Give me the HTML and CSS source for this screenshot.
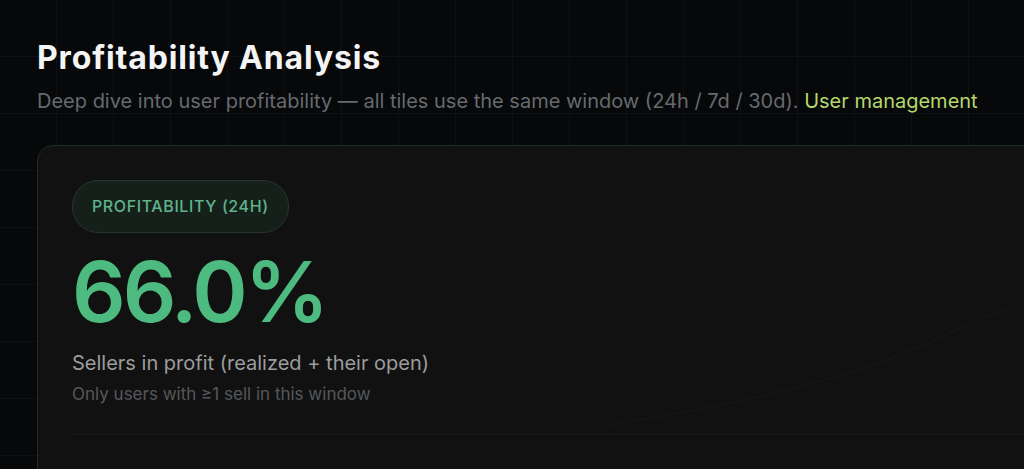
FILE: index.html
```html
<!DOCTYPE html>
<html lang="en">
<head>
    <meta charset="utf-8" />
    <title>Profitability Analysis</title>
    <link rel="stylesheet" href="styles.css">
</head>
<body>
<main class="page">
    <header class="page-head">
        <h1>Profitability Analysis</h1>
        <p class="lede">Deep dive into user profitability — all tiles use the same window (24h / 7d / 30d). <a href="#users">User management</a></p>
    </header>
    <section class="tile">
        <span class="badge">PROFITABILITY (24H)</span>
        <div class="big">66.0%</div>
        <p class="caption">Sellers in profit (realized + their open)</p>
        <p class="note">Only users with ≥1 sell in this window</p>
        <svg class="spark" viewBox="0 0 420 170" preserveAspectRatio="none" aria-hidden="true">
            <path d="M0,130 C60,120 120,110 180,95 C240,80 300,60 340,40 C370,25 400,15 420,10"/>
        </svg>
        <hr class="rule">
    </section>
</main>
</body>
</html>
```
FILE: styles.css
```css
html, body { margin: 0; height: 100%; overflow: hidden; }
body {
    background-color: #07080a;
    background-image:
        linear-gradient(#0e1013 1px, transparent 1px),
        linear-gradient(90deg, #0e1013 1px, transparent 1px);
    background-size: 57px 57px;
    background-position: -1px -1px;
    font-family: Inter, "Noto Sans", sans-serif;
    color: #e8e8e8;
}
.page {
    padding: 38px 0 0 37px;
}
.page-head h1 {
    margin: 0;
    font-size: 32px;
    font-weight: 700;
    letter-spacing: 0.85px;
    color: #f4f4f4;
    line-height: 40px;
}
.lede {
    margin: 9px 0 0;
    font-size: 20px;
    line-height: 28px;
    color: #666a6e;
}
.lede a {
    color: #b6d86c;
    text-decoration: none;
}
.tile {
    position: relative;
    margin-top: 30px;
    height: 420px;
    margin-right: -40px;
    background: #111111;
    border: 1px solid #1f2c27;
    border-radius: 16px;
    padding: 34px 0 0 34px;
}
.badge {
    display: inline-block;
    padding: 0 19px;
    height: 51px;
    line-height: 51px;
    border: 1px solid #26362e;
    border-radius: 26px;
    background: #16201b;
    color: #5fb38b;
    font-size: 16px;
    font-weight: 500;
    letter-spacing: 0.6px;
}
.big {
    margin-top: 17px;
    font-size: 84px;
    font-weight: 600;
    line-height: 84px;
    color: #4dbb80;
    letter-spacing: -3px;
}
.caption {
    margin: 16px 0 0;
    font-size: 20px;
    line-height: 26px;
    color: #9c9c9c;
}
.note {
    margin: 7px 0 0;
    font-size: 17px;
    line-height: 22px;
    color: #55585a;
}
.rule {
    margin: 29px 0 0;
    border: 0;
    border-top: 1px solid #1a1b1b;
}
.spark {
    position: absolute;
    right: 40px;
    top: 150px;
    width: 420px;
    height: 170px;
}
.spark path {
    fill: none;
    stroke: #151515;
    stroke-width: 2;
}
```
